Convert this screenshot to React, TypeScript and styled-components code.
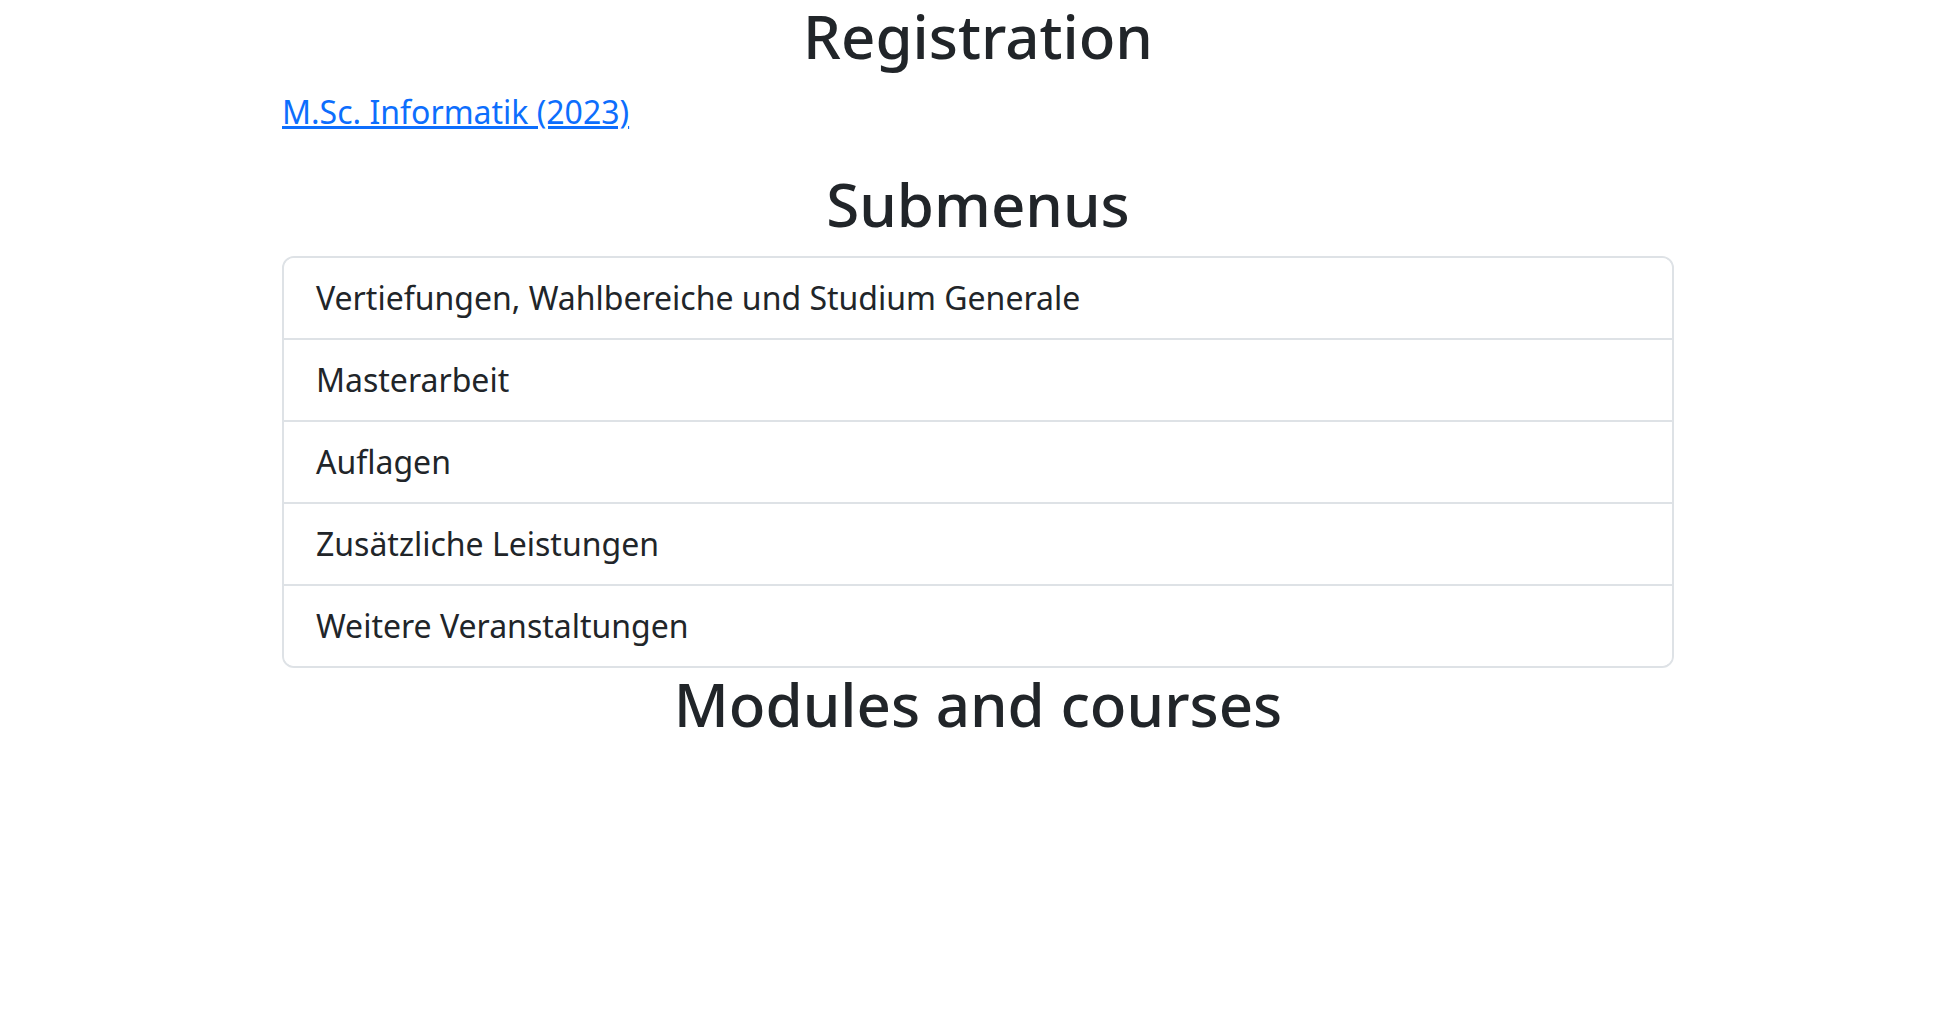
import React from "react";
import styled, { createGlobalStyle } from "styled-components";

const Global = createGlobalStyle`
  *, *::before, *::after { box-sizing: border-box; }
  body {
    margin: 0;
    background: #fff;
    color: #212529;
    font-family: "Noto Sans", "DejaVu Sans", sans-serif;
    font-size: 32px;
    line-height: 1.5;
  }
`;

const Container = styled.div`
  width: 100%;
  max-width: 1440px;
  margin: 0 auto;
  padding: 0 24px;
`;

const Heading = styled.h2`
  margin: 0 0 16px;
  font-size: 60px;
  font-weight: 500;
  line-height: 1.2;
  text-align: center;
  color: #212529;
`;

const Paragraph = styled.p`
  margin: 0 0 32px;
`;

const Link = styled.a`
  color: #0d6efd;
  text-decoration: underline;
`;

const ListGroup = styled.ul`
  display: flex;
  flex-direction: column;
  margin: 0;
  padding: 0;
  list-style: none;
  border: 2px solid #dee2e6;
  border-radius: 12px;
  overflow: hidden;
`;

const ListItem = styled.li`
  padding: 16px 32px;
  color: #212529;
  background: #fff;
  & + & {
    border-top: 2px solid #dee2e6;
  }
`;

const items = [
  "Vertiefungen, Wahlbereiche und Studium Generale",
  "Masterarbeit",
  "Auflagen",
  "Zusätzliche Leistungen",
  "Weitere Veranstaltungen",
];

export default function App() {
  return (
    <>
      <Global />
      <Container>
        <Heading>Registration</Heading>
        <Paragraph>
          <Link href="#">M.Sc. Informatik (2023)</Link>
        </Paragraph>
        <Heading>Submenus</Heading>
        <ListGroup>
          {items.map((t) => (
            <ListItem key={t}>{t}</ListItem>
          ))}
        </ListGroup>
        <Heading>Modules and courses</Heading>
      </Container>
    </>
  );
}
